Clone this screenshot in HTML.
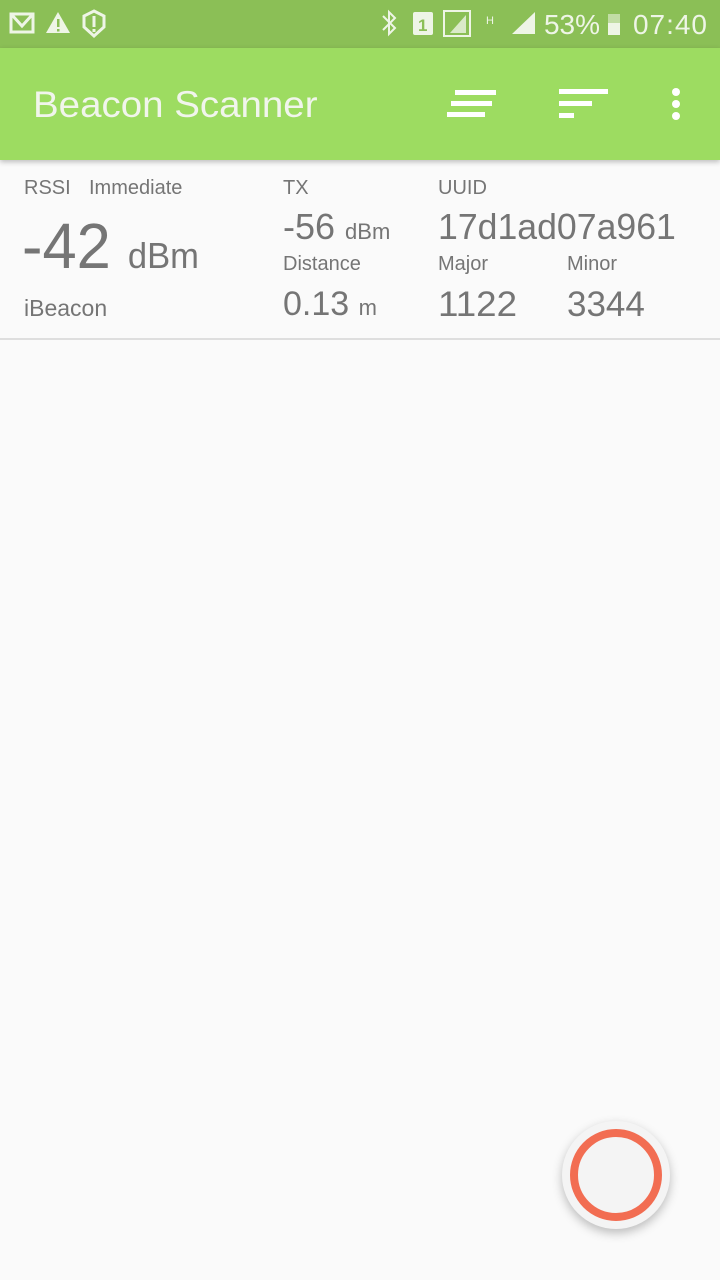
<!DOCTYPE html>
<html><head><meta charset="utf-8"><style>
body{margin:0;width:720px;height:1280px;background:#fafafa;position:relative;overflow:hidden;font-family:"Liberation Sans",sans-serif;}
.a{position:absolute;line-height:1;white-space:nowrap;color:#757575;transform-origin:left center;transform:scaleX(1);}
.l{font-size:20px;transform:scaleX(1);}
.sb{position:absolute;left:0;top:0;width:720px;height:48px;background:#8bbf56;}
.tb{position:absolute;left:0;top:48px;width:720px;height:112px;background:#9ddc61;box-shadow:0 2px 5px rgba(0,0,0,0.25);}
</style></head><body>
<div class="sb">
 <svg width="720" height="48" style="position:absolute;left:0;top:0">
  <g fill="none" stroke="#eef5e6" stroke-width="3">
   <rect x="11" y="14" width="22" height="18"/>
   <path d="M12 15 L22 26 L32 15"/>
   <path d="M94 11 L104 16 L104 27 Q94 36 94 36 Q84 27 84 27 L84 16 Z"/>
  </g>
  <path d="M58 12 L70 33 L46 33 Z" fill="#eef5e6"/>
  <rect x="57" y="19" width="2.5" height="8" fill="#8bbf56"/><rect x="57" y="29" width="2.5" height="2.5" fill="#8bbf56"/>
  <rect x="92.5" y="16" width="3" height="11" fill="#eef5e6"/><rect x="92.5" y="29" width="3" height="3" fill="#eef5e6"/>
  <path d="M383 16 L395 28 L389 34 L389 12 L395 18 L383 30" fill="none" stroke="#eef5e6" stroke-width="2"/>
  <rect x="413" y="12" width="20" height="23" rx="2" fill="#eef5e6"/>
  <text x="418" y="31" font-size="17" font-weight="bold" fill="#8bbf56" font-family="Liberation Sans">1</text>
  <rect x="444" y="11" width="26" height="25" fill="none" stroke="#eef5e6" stroke-width="2"/>
  <path d="M450 33 L466 33 L466 15 Z" fill="#eef5e6" opacity="0.8"/>
  <text x="486" y="24" font-size="11" fill="#eef5e6" font-family="Liberation Sans">H</text>
  <path d="M512 34 L535 34 L535 12 Z" fill="#eef5e6"/>
  <text x="544" y="34" font-size="28" fill="#eef5e6" font-family="Liberation Sans" textLength="56">53%</text>
  <rect x="608" y="14" width="12" height="21" fill="#eef5e6" opacity="0.55"/><rect x="608" y="23" width="12" height="12" fill="#eef5e6"/>
  <text x="633" y="34" font-size="28" fill="#eef5e6" font-family="Liberation Sans" textLength="74">07:40</text>
 </svg>
</div>
<div class="tb">
 <div class="a" style="left:33px;top:38px;font-size:37px;color:#f1f5ec;transform:scaleX(1.04)">Beacon Scanner</div>
 <svg width="720" height="112" style="position:absolute;left:0;top:0">
  <g fill="#fff">
   <rect x="455" y="42" width="41" height="5"/><rect x="451" y="53" width="41" height="5"/><rect x="447" y="64" width="38" height="5"/>
   <rect x="559" y="41" width="49" height="5"/><rect x="559" y="53" width="33" height="5"/><rect x="559" y="65" width="15" height="5"/>
   <circle cx="676" cy="44" r="4"/><circle cx="676" cy="56" r="4"/><circle cx="676" cy="68" r="4"/>
  </g>
 </svg>
</div>
<div class="a l" style="left:24px;top:178px">RSSI</div>
<div class="a l" style="left:89px;top:178px">Immediate</div>
<div class="a" style="left:22px;top:214px;font-size:64px;transform:scaleX(0.96)">-42 <span style="font-size:36px">dBm</span></div>
<div class="a" style="left:24px;top:297px;font-size:23px">iBeacon</div>
<div class="a l" style="left:283px;top:178px">TX</div>
<div class="a" style="left:283px;top:209px;font-size:36px">-56 <span style="font-size:22px">dBm</span></div>
<div class="a l" style="left:283px;top:254px">Distance</div>
<div class="a" style="left:283px;top:287px;font-size:34px">0.13 <span style="font-size:22px">m</span></div>
<div class="a l" style="left:438px;top:178px">UUID</div>
<div class="a" style="left:438px;top:209px;font-size:36px;transform:scaleX(0.99)">17d1ad07a961</div>
<div class="a l" style="left:438px;top:254px">Major</div>
<div class="a" style="left:438px;top:287px;font-size:35px;transform:scaleX(1.05)">1122</div>
<div class="a l" style="left:567px;top:254px">Minor</div>
<div class="a" style="left:567px;top:287px;font-size:35px">3344</div>
<div style="position:absolute;left:0;top:338px;width:720px;height:2px;background:#dedede"></div>
<div style="position:absolute;left:562px;top:1121px;width:108px;height:108px;border-radius:50%;background:#f4f4f4;box-shadow:0 4px 10px rgba(0,0,0,0.25)"></div>
<div style="position:absolute;left:570px;top:1129px;width:76px;height:76px;border-radius:50%;border:8px solid #f26d52;background:#f4f4f4"></div>
</body></html>
